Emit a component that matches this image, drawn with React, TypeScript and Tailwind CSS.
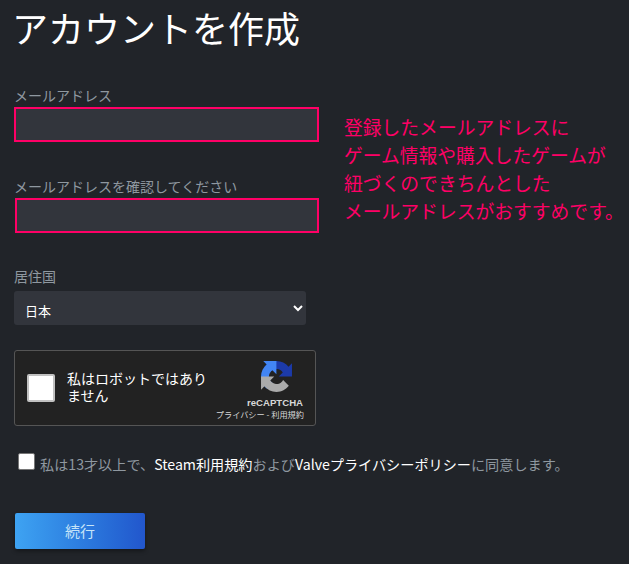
const FONT = "font-['Noto_Sans_CJK_JP','Liberation_Sans',sans-serif]"

function RecaptchaLogo() {
  return (
    <svg viewBox="0 0 64 64" className="w-[31px] h-[31px]">
      <path d="M64 31.955l-.033-1.37V4.687l-7.16 7.16C50.948 4.674 42.033.093 32.05.093c-10.4 0-19.622 4.96-25.458 12.64l11.736 11.86c1.15-2.127 2.784-3.955 4.77-5.33 2.05-1.6 4.952-2.91 8.952-2.91.483 0 .856.057 1.13.163 4.956.39 9.252 3.125 11.782 7.09l-8.307 8.307c10.522-.04 22.4-.066 27.45.06" fill="#1c3aa9" />
      <path d="M31.862.094l-1.37.033H4.594l7.16 7.16C4.58 13.147 0 22.06 0 32.046c0 10.4 4.96 19.622 12.64 25.458L24.5 45.768c-2.127-1.15-3.955-2.784-5.33-4.77-2.05-1.6-2.91-4.952-2.91-8.952 0-.483.057-.856.163-1.13.39-4.956 3.125-9.252 7.09-11.782l8.307 8.307c-.04-10.522-.066-22.4.06-27.45" fill="#4285f4" />
      <path d="M.001 32.045l.033 1.37v25.898l7.16-7.16c5.86 7.173 14.774 11.754 24.76 11.754 10.4 0 19.622-4.96 25.458-12.64l-11.736-11.86c-1.15 2.127-2.784 3.955-4.77 5.33-2.05 1.6-4.952 2.91-8.952 2.91-.483 0-.856-.057-1.13-.163-4.956-.39-9.252-3.125-11.782-7.09l8.307-8.307c-10.522.04-22.4.066-27.45-.06" fill="#ababab" />
    </svg>
  )
}

export default function App() {
  return (
    <div className={`w-[629px] h-[564px] overflow-hidden bg-[#212429] ${FONT}`}>
      <h1 className="pl-[12px] pt-[5px] h-[84px] text-[36px] leading-[44px] text-white font-normal">アカウントを作成</h1>

      <div className="flex">
        <div className="w-[344px] shrink-0 pl-[14px]">
          <label className="block pt-[1px] h-[23px] text-[14px] leading-[20px] text-[#8f98a0]">メールアドレス</label>
          <div className="w-[305px] h-[35px] bg-[#32353c] border-2 border-[#ff0066]" />
          <label className="block mt-[34px] h-[22px] text-[14px] leading-[20px] text-[#8f98a0]">メールアドレスを確認してください</label>
          <div className="ml-[1px] w-[304px] h-[35px] bg-[#32353c] border-2 border-[#ff0066]" />
        </div>
        <div className="pt-[29px] text-[18.8px] leading-[28px] text-[#ff0066] whitespace-nowrap">
          <p>登録したメールアドレスに</p>
          <p>ゲーム情報や購入したゲームが</p>
          <p>紐づくのできちんとした</p>
          <p>メールアドレスがおすすめです。</p>
        </div>
      </div>

      <div className="pl-[14px] pt-[33px]">
        <label className="block pt-[1px] h-[25px] text-[14px] leading-[19px] text-[#8f98a0]">居住国</label>
        <select className="block w-[292px] h-[34px] pl-[7px] pr-[4px] pt-[4px] rounded-[3px] bg-[#32353c] text-white text-[13px]">
          <option>日本</option>
        </select>

        <div className="mt-[25px] w-[302px] h-[76px] flex items-center bg-[#222222] border border-[#555555] rounded-[3px]">
          <div className="ml-[12px] w-[28px] h-[28px] bg-white border-2 border-[#c1c1c1] rounded-[2px] shrink-0" />
          <div className="ml-[12px] w-[150px] pb-[3px] text-[14px] leading-[17px] text-white">私はロボットではありません</div>
          <div className="ml-auto mr-[11px] flex flex-col items-end">
            <div className="mr-[12px] mt-[4px] h-[31px]">
              <RecaptchaLogo />
            </div>
            <span className="mt-[4px] mr-[1px] font-['Liberation_Sans',sans-serif] text-[9.6px] leading-[13px] font-bold text-[#d8d8d8]">reCAPTCHA</span>
            <span className="text-[8.2px] leading-[11px] text-[#d8d8d8] whitespace-nowrap">プライバシー - 利用規約</span>
          </div>
        </div>

        <div className="mt-[27px] flex items-start">
          <div className="ml-[4px] w-[17px] h-[17px] bg-white border border-[#767676] rounded-[2px] shrink-0" />
          <p className="ml-[5px] mt-[-1px] text-[14.15px] leading-[24px] text-[#8f98a0] whitespace-nowrap">
            私は13才以上で、<span className="text-white">Steam利用規約</span>および<span className="text-white">Valveプライバシーポリシー</span>に同意します。
          </p>
        </div>

        <button className="block mt-[37px] ml-[1px] w-[130px] h-[36px] rounded-[2px] bg-gradient-to-r from-[#3ea3f2] to-[#2256cc] text-[15px] text-[#c7e4f8] shadow-[0_2px_4px_rgba(0,0,0,0.4)]">続行</button>
      </div>
    </div>
  )
}
